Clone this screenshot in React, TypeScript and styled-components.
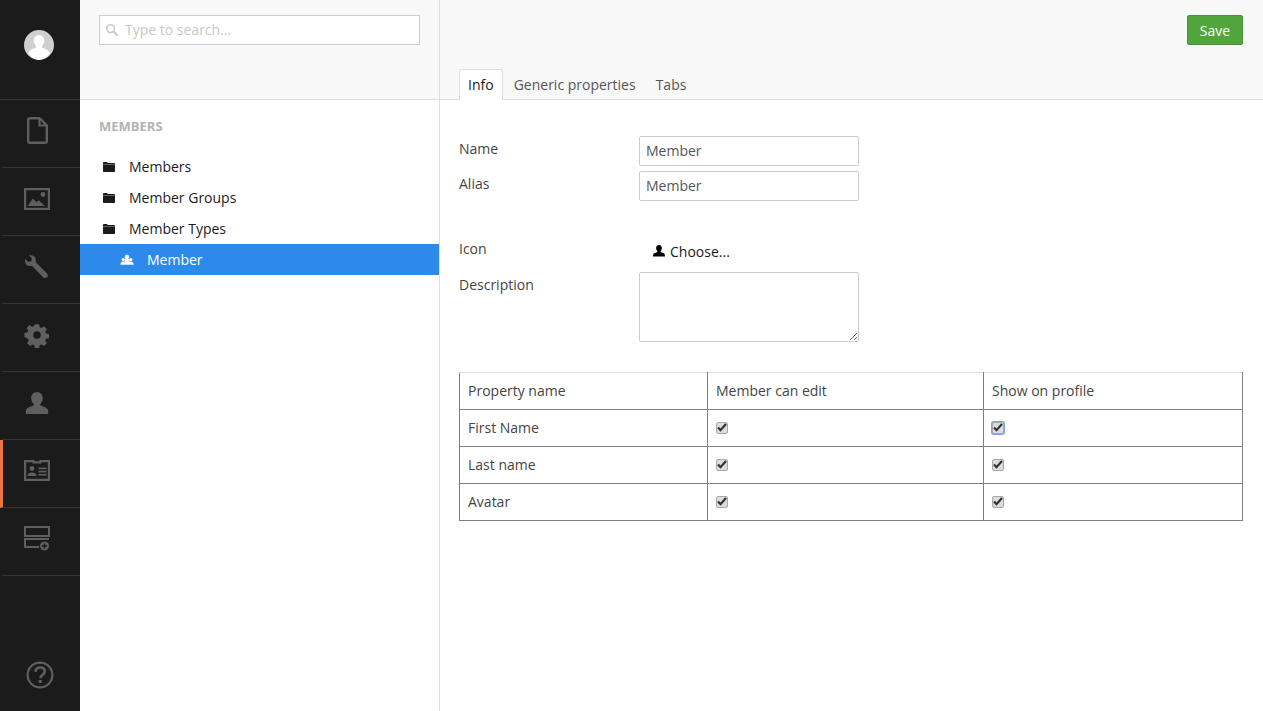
import React from 'react';
import styled, {createGlobalStyle} from "styled-components";

const GlobalStyle = createGlobalStyle`
  html, body {
    margin: 0;
    padding: 0;
    height: 100%;
    overflow: hidden;
  }
  #root {
    height: 100%;
  }
  body {
    font-family: "Open Sans", "Liberation Sans", sans-serif;
    font-size: 14px;
    color: #444;
  }
  * {
    box-sizing: border-box;
  }
`

const FolderIcon = () => (
    <svg width="14" height="12" viewBox="0 0 14 12">
        <path d="M1 2.200C1 1.500 1.400 1 2 1h2.600c.5 0 .8.2 1 .7l.2.3H12c.6 0 1 .4 1 1v7c0 .6-.4 1-1 1H2c-.6 0-1-.4-1-1z" fill="#1b1b1b"/>
        <rect x="1" y="3" width="12" height=".8" fill="#777"/>
    </svg>
);

const MembersIcon = () => (
    <svg width="14" height="12" viewBox="0 0 14 12">
        <circle cx="7" cy="3" r="2.300" fill="#fff"/>
        <circle cx="3.300" cy="5.600" r="1.700" fill="#fff"/>
        <circle cx="10.700" cy="5.600" r="1.700" fill="#fff"/>
        <path d="M.3 10.800c0-1.800 1-3 2.700-3.200h8c1.700.2 2.700 1.400 2.700 3.200z" fill="#fff"/>
        <rect x="5" y="5" width="4" height="3" fill="#fff"/>
    </svg>
);

const SearchIcon = () => (
    <svg width="14" height="14" viewBox="0 0 14 14">
        <circle cx="5.600" cy="5.600" r="3.900" fill="none" stroke="#c8c8c8" strokeWidth="1.500"/>
        <path d="M8.600 8.600l4 4" stroke="#c8c8c8" strokeWidth="2"/>
    </svg>
);

const nav = [
    <svg key="doc" width="21" height="27" viewBox="0 0 21 27">
        <path d="M3 1.200h9.500l7.300 7.300V24c0 1-.8 1.800-1.800 1.800H3c-1 0-1.800-.8-1.800-1.800V3c0-1 .8-1.800 1.800-1.800z" fill="none" stroke="#5f5f5f" strokeWidth="2.400"/>
        <path d="M12.500 1.200v7.300h7.300" fill="none" stroke="#5f5f5f" strokeWidth="2.200"/>
    </svg>,
    <svg key="img" width="26" height="22" viewBox="0 0 26 22">
        <rect x="1.100" y="1.100" width="23.800" height="19.800" fill="none" stroke="#5f5f5f" strokeWidth="2.200"/>
        <circle cx="19" cy="6.500" r="2.400" fill="#5f5f5f"/>
        <path d="M3.500 18l5.500-7.500 3.400 3.800 2.400-2 6 5.700z" fill="#5f5f5f"/>
    </svg>,
    <svg key="wrench" width="26" height="26" viewBox="0 0 28 28">
        <path d="M9 1.500L5 1l3.500 3.600-.6 3.200-3.300.7L1 5l.4 4.400c.5 2.600 3.600 4.200 6.400 3.400l.7-.2L20.600 25c1.200 1.200 3 1.200 4.200.1 1.200-1.200 1.200-3 0-4.200L12.500 8.500l.2-1C13.100 4.500 11.800 2 9 1.500z" fill="#5f5f5f"/>
    </svg>,
    <svg key="gear" width="26" height="26" viewBox="0 0 28 28">
        <path fillRule="evenodd" d="M11.500 1h5l.7 3.600 2.200.9 3-2 3.500 3.500-2 3 .9 2.200 3.600.7v5l-3.600.7-.9 2.200 2 3-3.500 3.500-3-2-2.200.9-.7 3.600h-5l-.7-3.600-2.200-.9-3 2-3.500-3.500 2-3-.9-2.200L-1 16.500v-5l3.600-.7.9-2.200-2-3L5 2.100l3 2 2.200-.9zM14 9.500a4.500 4.500 0 1 0 0 9 4.500 4.500 0 0 0 0-9z" fill="#5f5f5f" transform="translate(1.400 1.400) scale(.9)"/>
    </svg>,
    <svg key="person" width="24" height="24" viewBox="0 0 26 26">
        <path d="M13 1c3.800 0 6.300 3 6.300 6.700 0 2.800-1.200 5-2.800 6.500v1.600c3.200 1 8 2.400 8.500 5.300.1.800.1 2.900.1 3.900H.9c0-1 0-3.100.1-3.900.5-2.900 5.300-4.300 8.500-5.300v-1.600C7.900 12.700 6.700 10.500 6.700 7.700 6.700 4 9.200 1 13 1z" fill="#5f5f5f"/>
    </svg>,
    <svg key="card" width="26" height="21" viewBox="0 0 26 21">
        <path d="M1.100 1.100h8.400v1.200h7V1.100h8.400v18.800H1.100z" fill="none" stroke="#5f5f5f" strokeWidth="2.200"/>
        <circle cx="8" cy="8.500" r="2.400" fill="#5f5f5f"/>
        <path d="M3.500 16c0-2.400 1.800-3.400 4.500-3.400s4.500 1 4.500 3.400z" fill="#5f5f5f"/>
        <rect x="14.500" y="7.500" width="8" height="1.700" fill="#5f5f5f"/>
        <rect x="14.500" y="10.700" width="8" height="1.700" fill="#5f5f5f"/>
        <rect x="14.500" y="13.900" width="8" height="1.700" fill="#5f5f5f"/>
    </svg>,
    <svg key="add" width="26" height="25" viewBox="0 0 26 25">
        <rect x="1" y="1" width="24" height="9" fill="none" stroke="#5f5f5f" strokeWidth="2"/>
        <path d="M25 13H1v8h14" fill="none" stroke="#5f5f5f" strokeWidth="2"/>
        <circle cx="20.500" cy="20" r="4.800" fill="#5f5f5f" stroke="#1b1b1b" strokeWidth=".6"/>
        <path d="M18 20h5M20.500 17.500v5" stroke="#1b1b1b" strokeWidth="1.400"/>
    </svg>,
];

const HelpIcon = () => (
    <svg width="28" height="28" viewBox="0 0 28 28">
        <circle cx="14" cy="14" r="12.400" fill="none" stroke="#5f5f5f" strokeWidth="2.200"/>
        <path d="M9.500 10.800c.2-2.800 2-4.300 4.700-4.300 2.600 0 4.500 1.500 4.500 3.800 0 3.500-4.200 3.400-4.200 6.900" fill="none" stroke="#5f5f5f" strokeWidth="2.600"/>
        <rect x="12.800" y="19" width="3" height="3" fill="#5f5f5f"/>
    </svg>
);

const Checkbox = ({focused}: {focused?: boolean}) => (
    <StyledCheckbox focused={focused}>
        <svg width="10" height="9" viewBox="0 0 10 9">
            <path d="M1 4.500l2.500 2.700L9 1" fill="none" stroke="#333" strokeWidth="2.200"/>
        </svg>
    </StyledCheckbox>
);

const rows = ['First Name', 'Last name', 'Avatar'];

export default function App() {
    return (
        <StyledApp>
            <GlobalStyle/>
            <StyledNav>
                <StyledNavAvatar>
                    <svg width="30" height="30" viewBox="0 0 30 30">
                        <circle cx="15" cy="15" r="15" fill="#cfcfcf"/>
                        <path d="M15 5c3.200 0 5.300 2.500 5.300 5.600 0 2.300-1 4.200-2.300 5.400v1.700c2.800.9 6.200 2.200 8 5.100A15 15 0 0 1 15 30 15 15 0 0 1 4 22.800c1.800-2.900 5.200-4.200 8-5.100V16c-1.300-1.200-2.300-3.100-2.300-5.400C9.700 7.500 11.800 5 15 5z" fill="#fff"/>
                    </svg>
                </StyledNavAvatar>
                {nav.map((icon, i) => (
                    <StyledNavItem key={i} active={i === 5}>{icon}</StyledNavItem>
                ))}
                <StyledNavHelp>
                    <HelpIcon/>
                </StyledNavHelp>
            </StyledNav>
            <StyledTree>
                <StyledTreeHeader>
                    <StyledSearch>
                        <SearchIcon/>
                        <StyledSearchInput placeholder="Type to search..."/>
                    </StyledSearch>
                </StyledTreeHeader>
                <StyledTreeTitle>Members</StyledTreeTitle>
                <StyledTreeItem><FolderIcon/>Members</StyledTreeItem>
                <StyledTreeItem><FolderIcon/>Member Groups</StyledTreeItem>
                <StyledTreeItem><FolderIcon/>Member Types</StyledTreeItem>
                <StyledTreeItem selected><MembersIcon/>Member</StyledTreeItem>
            </StyledTree>
            <StyledMain>
                <StyledMainHeader>
                    <StyledSave>Save</StyledSave>
                    <StyledTabs>
                        <StyledTab active>Info</StyledTab>
                        <StyledTab>Generic properties</StyledTab>
                        <StyledTab>Tabs</StyledTab>
                    </StyledTabs>
                </StyledMainHeader>
                <StyledForm>
                    <StyledFormRow>
                        <StyledLabel>Name</StyledLabel>
                        <StyledInput defaultValue="Member"/>
                    </StyledFormRow>
                    <StyledFormRow>
                        <StyledLabel>Alias</StyledLabel>
                        <StyledInput defaultValue="Member"/>
                    </StyledFormRow>
                    <StyledIconRow>
                        <StyledLabel>Icon</StyledLabel>
                        <StyledChoose>
                            <svg width="12" height="12" viewBox="0 0 12 12">
                                <path d="M6 0c1.800 0 2.900 1.400 2.900 3.100 0 1.200-.5 2.200-1.200 2.900v1c1.400.5 3.800 1 4.100 2.500.1.500.1 1.500.1 2.100H.1c0-.6 0-1.600.1-2.100C.5 8 2.900 7.500 4.300 7V6c-.7-.7-1.200-1.700-1.200-2.900C3.100 1.400 4.200 0 6 0z" fill="#000"/>
                            </svg>
                            Choose...
                        </StyledChoose>
                    </StyledIconRow>
                    <StyledFormRow>
                        <StyledLabel>Description</StyledLabel>
                        <StyledTextarea/>
                    </StyledFormRow>
                    <StyledTable>
                        <thead>
                            <tr>
                                <StyledHeadCell>Property name</StyledHeadCell>
                                <StyledHeadCell>Member can edit</StyledHeadCell>
                                <StyledHeadCell>Show on profile</StyledHeadCell>
                            </tr>
                        </thead>
                        <tbody>
                            {rows.map((row, i) => (
                                <tr key={row}>
                                    <StyledCell>{row}</StyledCell>
                                    <StyledCell><Checkbox/></StyledCell>
                                    <StyledCell><Checkbox focused={i === 0}/></StyledCell>
                                </tr>
                            ))}
                        </tbody>
                    </StyledTable>
                </StyledForm>
            </StyledMain>
        </StyledApp>
    );
}

const StyledApp = styled.div`
  display: flex;
  height: 711px;
  width: 1263px;
  background-color: #fff;
`
const StyledNav = styled.nav`
  width: 80px;
  flex-shrink: 0;
  display: flex;
  flex-direction: column;
  background-color: #1b1b1b;
`
const StyledNavAvatar = styled.div`
  height: 100px;
  padding-bottom: 10px;
  display: flex;
  align-items: center;
  justify-content: center;
  border-bottom: 1px solid #343434;
  svg {
    margin-left: -2px;
  }
`
const StyledNavItem = styled.div<{active?: boolean}>`
  height: 68px;
  display: flex;
  align-items: center;
  justify-content: center;
  padding: 0 9px 6px 0;
  border-bottom: 1px solid #343434;
  border-left: 3px solid ${props => props.active ? '#e9763e' : 'transparent'};
`
const StyledNavHelp = styled.div`
  margin-top: auto;
  height: 72px;
  display: flex;
  align-items: center;
  justify-content: center;
  svg {
    margin-left: -1px;
  }
`
const StyledTree = styled.aside`
  width: 360px;
  flex-shrink: 0;
  display: flex;
  flex-direction: column;
  border-right: 1px solid #dfdfdf;
`
const StyledTreeHeader = styled.div`
  height: 100px;
  padding: 15px 19px 0 19px;
  background-color: #f8f8f8;
  border-bottom: 1px solid #dfdfdf;
`
const StyledSearch = styled.div`
  height: 30px;
  width: 321px;
  display: flex;
  align-items: center;
  gap: 6px;
  padding: 0 5px;
  background-color: #fff;
  border: 1px solid #ccc;
`
const StyledSearchInput = styled.input`
  flex: 1;
  min-width: 0;
  border: 0;
  outline: 0;
  padding: 0 0 2px 0;
  font: inherit;
  &::placeholder {
    color: #c8c8c8;
  }
`
const StyledTreeTitle = styled.h5`
  margin: 18px 0 17px 0;
  padding-left: 19px;
  font-size: 13px;
  line-height: 16px;
  font-weight: 700;
  text-transform: uppercase;
  color: #b3b3b3;
`
const StyledTreeItem = styled.div<{selected?: boolean}>`
  height: 31px;
  display: flex;
  align-items: center;
  gap: 13px;
  padding-left: ${props => props.selected ? '40px' : '22px'};
  color: ${props => props.selected ? '#fff' : '#1b1b1b'};
  background-color: ${props => props.selected ? '#2e8aea' : 'transparent'};
`
const StyledMain = styled.main`
  flex: 1;
  display: flex;
  flex-direction: column;
  min-width: 0;
`
const StyledMainHeader = styled.header`
  height: 100px;
  flex-shrink: 0;
  padding: 15px 20px 0 19px;
  display: flex;
  flex-direction: column;
  background-color: #f8f8f8;
  border-bottom: 1px solid #dfdfdf;
`
const StyledSave = styled.button`
  align-self: flex-end;
  flex-shrink: 0;
  width: 56px;
  height: 30px;
  padding: 0;
  font: inherit;
  color: #fff;
  background-color: #50a63d;
  border: 1px solid #469334;
  border-radius: 2px;
`
const StyledTabs = styled.div`
  display: flex;
  flex-shrink: 0;
  gap: 2px;
  margin-top: 24px;
`
const StyledTab = styled.div<{active?: boolean}>`
  height: 31px;
  padding: 0 8px;
  line-height: 29px;
  color: ${props => props.active ? '#1b1b1b' : '#555'};
  background-color: ${props => props.active ? '#fff' : 'transparent'};
  border: 1px solid ${props => props.active ? '#dfdfdf' : 'transparent'};
  border-bottom: 0;
  border-radius: 3px 3px 0 0;
`
const StyledForm = styled.div`
  padding: 36px 20px 0 19px;
  display: flex;
  flex-direction: column;
`
const StyledFormRow = styled.div`
  display: grid;
  grid-template-columns: 180px 220px;
  margin-bottom: 5px;
`
const StyledIconRow = styled(StyledFormRow)`
  margin-top: 30px;
  margin-bottom: 0;
  height: 36px;
`
const StyledLabel = styled.label`
  padding-top: 3px;
  line-height: 20px;
  color: #444;
`
const StyledInput = styled.input`
  height: 30px;
  padding: 0 6px 2px 6px;
  font: inherit;
  color: #555;
  border: 1px solid #ccc;
  border-radius: 2px;
  outline: 0;
`
const StyledChoose = styled.div`
  display: flex;
  align-items: center;
  gap: 5px;
  padding: 0 0 6px 14px;
  color: #1b1b1b;
`
const StyledTextarea = styled.textarea`
  height: 70px;
  padding: 4px 6px;
  font: inherit;
  border: 1px solid #ccc;
  border-radius: 2px;
  outline: 0;
`
const StyledTable = styled.table`
  margin-top: 25px;
  width: 784px;
  table-layout: fixed;
  border-collapse: collapse;
`
const StyledCell = styled.td`
  height: 37px;
  padding: 0 8px 2px 8px;
  font-weight: 400;
  text-align: left;
  color: #444;
  border: 1px solid #7f7f7f;
  &:nth-child(1) {
    width: 248px;
  }
  &:nth-child(2) {
    width: 276px;
  }
`
const StyledHeadCell = styled(StyledCell).attrs({as: 'th'})`
  border-top-color: #dedede;
`
const StyledCheckbox = styled.span<{focused?: boolean}>`
  width: 12px;
  height: 12px;
  margin-top: 1px;
  display: flex;
  align-items: center;
  justify-content: center;
  background-color: #dcdcdc;
  border: 1px solid #a8a8a8;
  border-radius: 2px;
  box-shadow: ${props => props.focused ? '0 0 0 1px #7ea6f0' : 'none'};
`
